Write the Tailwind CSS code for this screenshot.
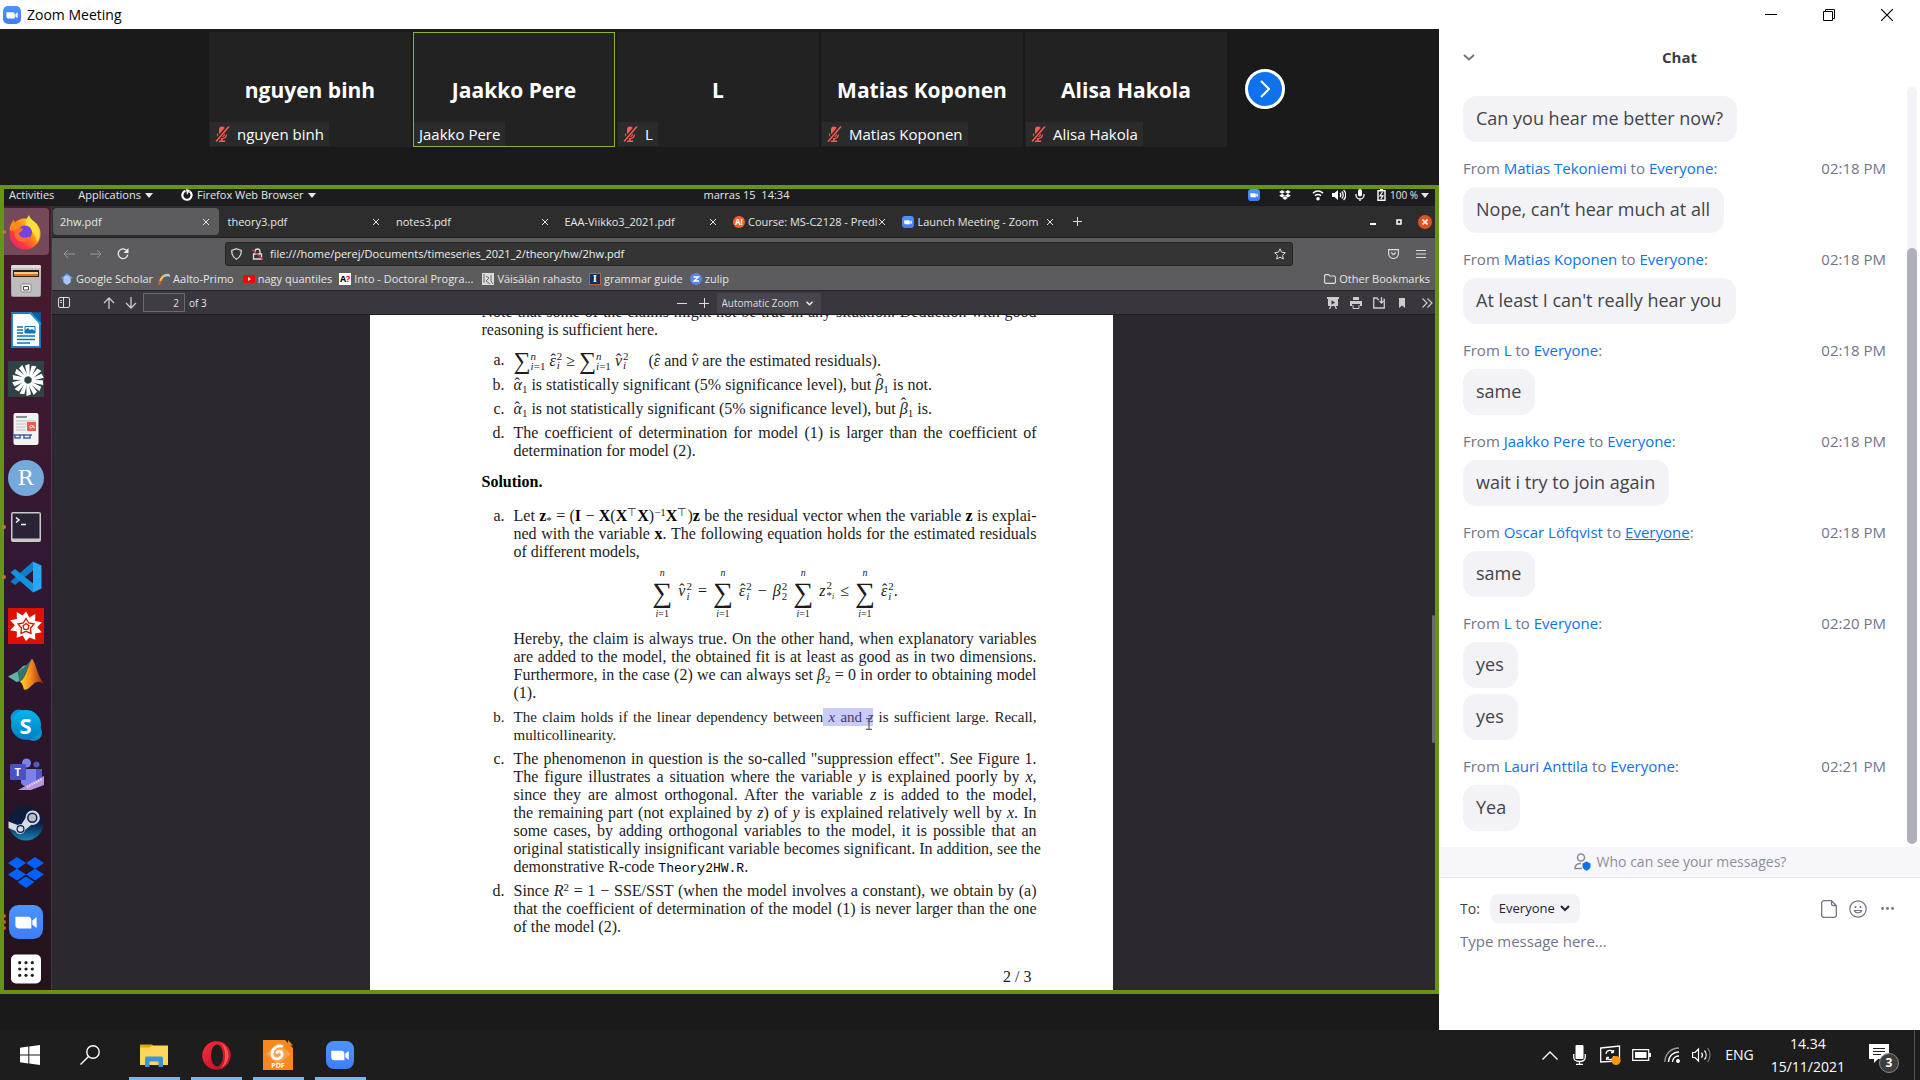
<!DOCTYPE html>
<html lang="en">
<head>
<meta charset="utf-8">
<title>Zoom Meeting</title>
<script src="https://cdn.jsdelivr.net/npm/@tailwindcss/browser@4"></script>
</head>
<body class="flex h-screen min-h-[700px] flex-col overflow-hidden bg-[#1a1a1a] font-['Open_Sans','Noto_Sans',sans-serif]">

<!-- Shared symbols -->
<svg class="absolute size-0" aria-hidden="true">
  <defs>
    <linearGradient id="zg" x1="0" y1="0" x2="0" y2="1"><stop offset="0" stop-color="#4d94ff"/><stop offset="1" stop-color="#3f7df5"/></linearGradient>
    <linearGradient id="ff" x1="1" y1="0" x2="0" y2="1"><stop offset="0" stop-color="#fff44f"/><stop offset=".4" stop-color="#ff980e"/><stop offset=".7" stop-color="#ff3647"/><stop offset="1" stop-color="#e31587"/></linearGradient>
    <linearGradient id="sk" x1="0" y1="0" x2="0" y2="1"><stop offset="0" stop-color="#00b7f0"/><stop offset="1" stop-color="#007cc1"/></linearGradient>
    <linearGradient id="st" x1="0" y1="0" x2="0" y2="1"><stop offset="0" stop-color="#111d2e"/><stop offset=".5" stop-color="#0a1b48"/><stop offset="1" stop-color="#1387b8"/></linearGradient>
    <linearGradient id="ml" x1="0" y1="0" x2="1" y2="0"><stop offset="0" stop-color="#ffd91a"/><stop offset=".45" stop-color="#f58a1f"/><stop offset="1" stop-color="#8f1d08"/></linearGradient>
    <linearGradient id="cab" x1="0" y1="0" x2="0" y2="1"><stop offset="0" stop-color="#c9c9c9"/><stop offset="1" stop-color="#9a9a9a"/></linearGradient>
    <linearGradient id="op" x1="0" y1="0" x2="1" y2="1"><stop offset="0" stop-color="#ff2b3d"/><stop offset="1" stop-color="#b00e1c"/></linearGradient>
  </defs>
  <symbol id="zoom" viewBox="0 0 32 32"><rect width="32" height="32" rx="9" fill="url(#zg)"/><path d="M6 11h11.500a3.500 3.500 0 0 1 3.500 3.500V22H9.500A3.500 3.500 0 0 1 6 18.500z M22 14.500l4-3.200v10.400l-4-3.200z" fill="#fff"/></symbol>
  <symbol id="muted" viewBox="0 0 16 18"><path d="M8 1.500a3 3 0 0 1 3 3V9a3 3 0 0 1-6 0V4.500a3 3 0 0 1 3-3z M7.200 13h1.600v2.500h2.400V17H4.800v-1.500h2.400z" fill="#ff5a5a"/><path d="M3.500 8.500v1A4.500 4.500 0 0 0 8 13.500a4.500 4.500 0 0 0 4.500-4" fill="none" stroke="#ff5a5a" stroke-width="1.200"/><path d="M14.500 1.500L1.500 16.500" stroke="#2b2b2b" stroke-width="4"/><path d="M15 1.500L2 16.500" stroke="#ff5a5a" stroke-width="1.500"/></symbol>
  <symbol id="x" viewBox="0 0 8 8"><path d="M1 1l6 6M7 1L1 7" stroke="currentColor" fill="none"/></symbol>
  <symbol id="dropbox" viewBox="0 0 36 31"><path d="M9 0l9 6-9 6-9-6zM27 0l9 6-9 6-9-6zM0 17.500l9-6 9 6-9 6zM27 11.500l9 6-9 6-9-6zM9.500 25l8.500-5.500 8.500 5.500-8.500 6z" fill="currentColor"/></symbol>
  <symbol id="tri" viewBox="0 0 8 5"><path d="M0 0h8L4 5z" fill="currentColor"/></symbol>
</svg>

<!-- Window title bar -->
<header class="flex h-[29px] shrink-0 items-center bg-white">
  <svg class="ml-[3px] size-[18px]"><use href="#zoom"/></svg>
  <h1 class="ml-[6px] text-[14px] leading-5 text-black">Zoom Meeting</h1>
  <div class="ml-auto flex pr-1 text-black *:flex *:h-[29px] *:w-[58px] *:items-center *:justify-center">
    <button aria-label="Minimize"><svg class="size-3" viewBox="0 0 12 12"><path d="M0 5.500h12" stroke="currentColor"/></svg></button>
    <button aria-label="Restore"><svg class="size-3" viewBox="0 0 12 12" fill="none" stroke="currentColor"><path d="M.5 2.500h9v9h-9zM2.500 2.500v-2h9v9h-2"/></svg></button>
    <button aria-label="Close"><svg class="size-3" viewBox="0 0 12 12"><path d="M0 0l12 12M12 0L0 12" stroke="currentColor" stroke-width="1.200"/></svg></button>
  </div>
</header>

<div class="flex min-h-0 flex-1">
  <!-- Meeting area -->
  <main class="flex min-w-0 flex-1 flex-col">
    <section class="flex h-[156px] shrink-0 justify-center gap-[2px] pl-[55px] pt-[3px] text-white" aria-label="Participants">
      <div class="flex h-[115px] w-[202px] flex-col justify-end bg-[#222]">
        <p class="flex flex-1 items-end justify-center pb-[18px] text-[21px] font-bold leading-7">nguyen binh</p>
        <div class="mb-px ml-px flex h-6 items-center gap-[7px] self-start bg-[#2b2b2b] pl-1 pr-[5px] text-[15px] leading-5"><svg class="h-[18px] w-4"><use href="#muted"/></svg>nguyen binh</div>
      </div>
      <div class="flex h-[115px] w-[202px] flex-col justify-end border border-[#84b92c] bg-[#222]">
        <p class="flex flex-1 items-end justify-center pb-[18px] text-[21px] font-bold leading-7">Jaakko Pere</p>
        <div class="flex h-6 items-center self-start bg-[#2b2b2b] px-[5px] text-[15px] leading-5">Jaakko Pere</div>
      </div>
      <div class="flex h-[115px] w-[202px] flex-col justify-end bg-[#222]">
        <p class="flex flex-1 items-end justify-center pb-[18px] text-[21px] font-bold leading-7">L</p>
        <div class="mb-px ml-px flex h-6 items-center gap-[7px] self-start bg-[#2b2b2b] pl-1 pr-[5px] text-[15px] leading-5"><svg class="h-[18px] w-4"><use href="#muted"/></svg>L</div>
      </div>
      <div class="flex h-[115px] w-[202px] flex-col justify-end bg-[#222]">
        <p class="flex flex-1 items-end justify-center pb-[18px] text-[21px] font-bold leading-7">Matias Koponen</p>
        <div class="mb-px ml-px flex h-6 items-center gap-[7px] self-start bg-[#2b2b2b] pl-1 pr-[5px] text-[15px] leading-5"><svg class="h-[18px] w-4"><use href="#muted"/></svg>Matias Koponen</div>
      </div>
      <div class="flex h-[115px] w-[202px] flex-col justify-end bg-[#222]">
        <p class="flex flex-1 items-end justify-center pb-[18px] text-[21px] font-bold leading-7">Alisa Hakola</p>
        <div class="mb-px ml-px flex h-6 items-center gap-[7px] self-start bg-[#2b2b2b] pl-1 pr-[5px] text-[15px] leading-5"><svg class="h-[18px] w-4"><use href="#muted"/></svg>Alisa Hakola</div>
      </div>
      <button class="ml-4 mt-[37px] flex size-10 shrink-0 items-center justify-center rounded-full border-[3px] border-white bg-[#0e72ed]" aria-label="Next participants"><svg class="h-[18px] w-[10px]" viewBox="0 0 10 18" fill="none" stroke="#fff" stroke-width="2"><path d="M1 1l8 8-8 8"/></svg></button>
    </section>

    <!-- Shared desktop -->
    <section class="mb-9 flex min-h-0 flex-1 flex-col border-4 border-[#679316] text-[11px] leading-4 text-[#e6e6e6]" aria-label="Shared screen">
      <div class="grid h-[17px] shrink-0 grid-cols-[1fr_auto_1fr] items-center bg-[#1c1c1e] pb-[5px] leading-3">
        <div class="flex items-center pl-[5px]">
          <span>Activities</span>
          <span class="ml-6 flex items-center gap-1">Applications <svg class="h-[5px] w-2"><use href="#tri"/></svg></span>
          <span class="ml-7 flex items-center gap-1"><svg class="size-3" viewBox="0 0 12 12"><path d="M4.500 1.800A4.600 4.600 0 1 0 8.500 2.300" fill="none" stroke="#fff" stroke-width="2.200"/><path d="M5 0l4 1-3 5z" fill="#fff"/></svg>Firefox Web Browser <svg class="h-[5px] w-2"><use href="#tri"/></svg></span>
        </div>
        <time class="mr-[-54px]">marras 15&nbsp; 14:34</time>
        <div class="flex items-center justify-end pr-[6px]">
          <svg class="size-3"><use href="#zoom"/></svg>
          <svg class="ml-[19px] h-[10px] w-3 text-white"><use href="#dropbox"/></svg>
          <svg class="ml-[21px] h-3 w-3" viewBox="0 0 12 12" fill="none" stroke="#fff" stroke-width="1.500"><path d="M1 4.200a7 7 0 0 1 10 0M3 6.700a4.200 4.200 0 0 1 6 0"/><circle cx="6" cy="9.700" r="1" fill="#fff"/></svg>
          <svg class="ml-2 h-3 w-[14px]" viewBox="0 0 14 12" fill="#fff"><path d="M0 4h2.500L6 1v10L2.500 8H0z"/><path d="M8 4a3 3 0 0 1 0 4M9.800 2.500a5 5 0 0 1 0 7M11.600 1a7 7 0 0 1 0 10" fill="none" stroke="#fff" stroke-width="1.200"/></svg>
          <svg class="ml-2 h-3 w-3" viewBox="0 0 12 12" fill="#fff"><rect x="4" y="0" width="4" height="7.500" rx="2"/><path d="M2 5v1a4 4 0 0 0 8 0V5M6 10v2" fill="none" stroke="#fff" stroke-width="1.300"/></svg>
          <svg class="ml-[11px] h-3 w-[9px]" viewBox="0 0 9 12" fill="none" stroke="#fff" stroke-width="1.400"><path d="M1 1.800h7v9.400H1zM3 .7h3"/><path d="M5.500 3L3 6.800h3L3.800 10" stroke-width="1.200"/></svg>
          <span class="ml-1 text-[10px]">100 %</span>
          <svg class="ml-[3px] h-[5px] w-2"><use href="#tri"/></svg>
        </div>
      </div>

      <div class="flex min-h-0 flex-1">
        <!-- Dock -->
        <nav class="flex w-[48px] shrink-0 flex-col justify-between border-r border-[#3f3a45] bg-linear-to-b from-[#4a1a2c] via-[#301733] via-50% to-[#24121c] pt-[2px] *:flex *:h-[47px] *:shrink-0 *:items-center *:justify-center *:pr-1" aria-label="Dock">
          <a href="#" aria-label="Firefox" class="relative mr-[2px] rounded-r-sm bg-[#74495a]"><span class="absolute -left-[2px] size-1 rounded-full bg-[#c07a1c]"></span>
            <svg class="size-9" viewBox="0 0 36 36"><circle cx="18" cy="20" r="15.500" fill="url(#ff)"/><path d="M22 1c1 4 4 5 7 9 5 7 4 14 1 18-2-9-5-11-11-14-1-5 0-9 3-13z" fill="#ffde3a"/><path d="M2.500 16C3 11 5 8 7 5.500 7 8 8 9 9 9.500c2-.5 4-.5 6 .5-3 2-3 4-5 8z" fill="#ff8a1c"/><circle cx="18" cy="18.500" r="7" fill="#7542e5"/><path d="M8 16c2-3 5-2 8-1-1 3-4 3-4 5 1 4 6 5 11 2-2 5-7 7-11 5-4-2-5-6-4-11z" fill="#ff6f2c"/></svg></a>
          <a href="#" aria-label="Files"><svg class="size-9" viewBox="0 0 36 36"><rect x="3" y="2" width="30" height="32" rx="2.500" fill="url(#cab)"/><rect x="3" y="2" width="30" height="3" rx="1.500" fill="#dcdcdc"/><rect x="5" y="7" width="26" height="8" fill="#2c2018"/><path d="M6 9h24v2H6z" fill="#f6c58a"/><path d="M6 11h24v2H6z" fill="#d8722a"/><path d="M4 14h28v19H4z" fill="#bdbdbd"/><rect x="13" y="21" width="10" height="8" rx="1" fill="#efefef" stroke="#8a8a8a"/><path d="M15.500 23.500h5v3.500h-5z" fill="#fff" stroke="#444"/></svg></a>
          <a href="#" aria-label="LibreOffice Writer"><svg class="size-9" viewBox="0 0 36 36"><path d="M4 1h19l9 9v25H4z" fill="#fff" stroke="#1b7fc0" stroke-width="1.800"/><path d="M23 .3h9.800V12z" fill="#0f5f9c"/><path d="M22 .3l10.800 12" stroke="#1b9adc" stroke-width="2"/><path d="M9 15h6M9 18h6M9 21h6M9 24h18M9 27.500h18M9 31h13" stroke="#1173b4" stroke-width="1.500"/><path d="M17 14.500h10v6.500H17z" fill="#fff" stroke="#1173b4"/><path d="M17 21v-3l3-2 2 2 2-1 3 2v2z" fill="#1173b4"/></svg></a>
          <a href="#" aria-label="Turbine"><svg class="size-9" viewBox="0 0 36 36"><rect width="36" height="36" fill="#2f4344"/><g fill="#fff"><path id="bl" d="M19.300 15.500L17 4.500l4.500-1.500.2 12z"/><use href="#bl" transform="rotate(26 20 19)"/><use href="#bl" transform="rotate(51 20 19)"/><use href="#bl" transform="rotate(77 20 19)"/><use href="#bl" transform="rotate(103 20 19)"/><use href="#bl" transform="rotate(129 20 19)"/><use href="#bl" transform="rotate(154 20 19)"/><use href="#bl" transform="rotate(180 20 19)"/><use href="#bl" transform="rotate(206 20 19)"/><use href="#bl" transform="rotate(231 20 19)"/><use href="#bl" transform="rotate(257 20 19)"/><use href="#bl" transform="rotate(283 20 19)"/><use href="#bl" transform="rotate(309 20 19)"/><use href="#bl" transform="rotate(334 20 19)"/></g></svg></a>
          <a href="#" aria-label="Document Viewer"><svg class="size-9" viewBox="0 0 36 36"><rect x="5.500" y="2" width="25" height="32" rx="2" fill="#f5f3f2"/><path d="M8 6h11" stroke="#555" stroke-width="1.300"/><path d="M8 10h20M8 13h10M8 16h10M8 19h10" stroke="#cfcfcf" stroke-width="1.600"/><rect x="19" y="11" width="9" height="9" fill="#ee5a4c"/><path d="M25 15.500c-1-2-4-1-3 1 1 1 3 0 3-2 0 2 0 3 2 2" fill="none" stroke="#fff" stroke-width=".9"/><path d="M5 24h19M7 24v3h5v-3M16 24v3h6v-3" fill="none" stroke="#3b62a8" stroke-width="1.500"/></svg></a>
          <a href="#" aria-label="RStudio"><span class="flex size-9 shrink-0 items-center justify-center rounded-full bg-[#75a9db] font-['DejaVu_Serif',serif] text-[21px] leading-none text-white">R</span></a>
          <a href="#" aria-label="Terminal" class="relative"><span class="absolute -left-[2px] size-1 rounded-full bg-[#c07a1c]"></span><svg class="size-9" viewBox="0 0 36 36"><rect x="3" y="3" width="30" height="30" rx="2" fill="#c9c9c9"/><rect x="4.500" y="4.500" width="27" height="25" fill="#2a2236"/><path d="M8 8.500l3 2.500-3 2.500M13 15.500h5" fill="none" stroke="#fff" stroke-width="1.500"/></svg></a>
          <a href="#" aria-label="Visual Studio Code" class="relative"><span class="absolute -left-[2px] size-1 rounded-full bg-[#c07a1c]"></span><svg class="size-9" viewBox="0 0 36 36"><path d="M25 2.500v9L7 26l-4.500-3.500z" fill="#0d7fc6"/><path d="M25 33.500v-9L7 10l-4.500 3.500z" fill="#1292dc"/><path d="M25 2.500l8.500 4v23l-8.500 4z" fill="#2aa6f2"/></svg></a>
          <a href="#" aria-label="Mathematica"><svg class="size-9" viewBox="0 0 36 36"><rect width="36" height="36" fill="#dd1100"/><path d="M18 3.500l3.400 5.900 5.900-3.300-.2 6.800 6.700 1.400-4.600 5 4.600 5-6.700 1.300.2 6.200-5.900-2.300L18 33l-3.400-5.500-5.900 2.300.2-6.200-6.700-1.300 4.600-5-4.600-5 6.700-1.400-.2-6.800 5.900 3.300z" fill="#fff"/><path d="M18 10.500l2.700 4.500 5.300 1-3.500 4 .5 5.500-5-2.200-5 2.200.5-5.500-3.500-4 5.300-1z" fill="none" stroke="#dd1100" stroke-width="1.300"/><path d="M18 15.500l3 2.200-1.100 3.600h-3.800L15 17.700z" fill="none" stroke="#dd1100" stroke-width="1.200"/></svg></a>
          <a href="#" aria-label="MATLAB"><svg class="size-9" viewBox="0 0 36 36"><path d="M0 19.500l9.500-5L15 9l4-1-7 16-3.500 1z" fill="#62b3a6"/><path d="M9.500 14.500c5-2 9-6 14.500-13l-8 19-4.500 4z" fill="#35756e"/><path d="M24 1.500c3 4 5 12 7 17 2 4 3 6 5 9-5-4-8-3-11 0-3 2-5 6-9 5-1-3-1-5-4-8 6-3 8-16 12-23z" fill="url(#ml)"/></svg></a>
          <a href="#" aria-label="Skype"><span class="relative flex size-9 shrink-0 items-center justify-center"><svg class="absolute inset-0 size-9" viewBox="0 0 36 36"><circle cx="11" cy="11" r="8.500" fill="#0a93d4"/><circle cx="25.500" cy="25.500" r="8.500" fill="#0a93d4"/><circle cx="18" cy="18" r="15" fill="url(#sk)"/></svg><span class="relative text-[22px] font-bold leading-none text-white">S</span></span></a>
          <a href="#" aria-label="Teams"><span class="relative flex size-9 shrink-0"><svg class="absolute inset-0 size-9" viewBox="0 0 36 36"><circle cx="18.500" cy="7" r="4.500" fill="#7b83eb"/><circle cx="28.500" cy="8.500" r="3" fill="#5059c9"/><path d="M25 13h9v13h-9z" fill="#5059c9"/><path d="M13 13h15v14c0 4-12 6-15 0z" fill="#7b83eb"/><rect x="2" y="8" width="16" height="16" rx="1.500" fill="#4b53bc"/><path d="M36 20v9l-13 5H10z" fill="#b893e0"/><path d="M19 31l15-8" stroke="#e8dcf5" stroke-width="2" stroke-dasharray="1.500 1"/></svg><span class="relative ml-[7px] mt-[10px] text-[11px] font-bold leading-none text-white">T</span></span></a>
          <a href="#" aria-label="Steam"><svg class="size-9" viewBox="0 0 36 36"><circle cx="18" cy="18" r="17.500" fill="url(#st)"/><path d="M24.500 5.500a7.200 7.200 0 1 1-1 14.300L17 25a5 5 0 0 1-9.500 1L.5 23v-6.500l9 3.500c1.500-.8 3-.8 3.800-.6l4.200-6.400a7.200 7.200 0 0 1 7-7.500z" fill="#d9dce2"/><circle cx="24.300" cy="12.700" r="4.500" fill="#b7bcc7" stroke="#0a1b48" stroke-width="1.500"/><circle cx="12.500" cy="24" r="3.400" fill="none" stroke="#0a1b48" stroke-width="1.200"/></svg></a>
          <a href="#" aria-label="Dropbox"><svg class="h-[31px] w-9 text-[#0061fe]"><use href="#dropbox"/></svg></a>
          <a href="#" aria-label="Zoom" class="relative"><span class="absolute -left-[2px] flex flex-col gap-[2px] *:size-1 *:rounded-full *:bg-[#a8701c]"><i></i><i></i><i></i></span><svg class="size-[34px]"><use href="#zoom"/></svg></a>
          <a href="#" aria-label="Show Applications" class="h-[42px]!"><svg class="size-[30px]" viewBox="0 0 30 30"><rect width="30" height="29" y=".5" rx="5" fill="#fff"/><g fill="#222"><circle cx="8.700" cy="8.700" r="1.600"/><circle cx="15" cy="8.700" r="1.600"/><circle cx="21.300" cy="8.700" r="1.600"/><circle cx="8.700" cy="15" r="1.600"/><circle cx="15" cy="15" r="1.600"/><circle cx="21.300" cy="15" r="1.600"/><circle cx="8.700" cy="21.300" r="1.600"/><circle cx="15" cy="21.300" r="1.600"/><circle cx="21.300" cy="21.300" r="1.600"/></g></svg></a>
        </nav>

        <!-- Browser -->
        <div class="flex min-w-0 flex-1 flex-col bg-[#2b292f]">
          <div class="flex h-8 shrink-0 items-center border-b border-[#1e1e1e] bg-[#2d2d2d]">
            <div class="grid w-[1011px] grid-cols-6 *:flex *:h-[27px] *:items-center *:whitespace-nowrap *:pl-[7px] *:pr-[9px] [&_button]:ml-auto [&_svg]:shrink-0" role="tablist">
              <div role="tab" class="mr-[2px] ml-px rounded bg-[#5c5b5e]">2hw.pdf<button aria-label="Close tab"><svg class="size-2"><use href="#x"/></svg></button></div>
              <div role="tab">theory3.pdf<button aria-label="Close tab"><svg class="size-2"><use href="#x"/></svg></button></div>
              <div role="tab">notes3.pdf<button aria-label="Close tab"><svg class="size-2"><use href="#x"/></svg></button></div>
              <div role="tab">EAA-Viikko3_2021.pdf<button aria-label="Close tab"><svg class="size-2"><use href="#x"/></svg></button></div>
              <div role="tab"><span class="mr-[3px] flex size-3 shrink-0 items-center justify-center rounded-full bg-[#f0622c] text-[8px] font-bold text-white">A!</span>Course: MS-C2128 - Predi<button aria-label="Close tab"><svg class="size-2"><use href="#x"/></svg></button></div>
              <div role="tab"><svg class="mr-1 size-3"><use href="#zoom"/></svg>Launch Meeting - Zoom<button aria-label="Close tab"><svg class="size-2"><use href="#x"/></svg></button></div>
            </div>
            <button class="ml-[10px]" aria-label="New tab"><svg class="size-[9px]" viewBox="0 0 9 9" stroke="#ddd"><path d="M4.500 0v9M0 4.500h9"/></svg></button>
            <div class="ml-auto flex items-center pr-[3px]">
              <button aria-label="Minimize browser"><svg class="h-3 w-[6px]" viewBox="0 0 6 12"><path d="M0 8h6" stroke="#fff" stroke-width="2"/></svg></button>
              <button class="ml-5" aria-label="Restore browser"><svg class="size-[6px]" viewBox="0 0 6 6"><path d="M1 1h4v4H1z" fill="none" stroke="#fff" stroke-width="1.500"/></svg></button>
              <button class="ml-4 flex size-[14px] items-center justify-center rounded-full bg-[#e2501f] text-white" aria-label="Close browser"><svg class="size-[6px]" viewBox="0 0 6 6"><path d="M.5.5l5 5M5.500.5l-5 5" stroke="#fff" stroke-width="1.600"/></svg></button>
            </div>
          </div>

          <div class="flex h-[31px] shrink-0 items-center bg-[#5c5b5e]">
            <button class="ml-[11px]" aria-label="Back"><svg class="h-[10px] w-3" viewBox="0 0 12 10" fill="none" stroke="#939295"><path d="M12 5H1M5 1L1 5l4 4"/></svg></button>
            <button class="ml-[15px]" aria-label="Forward"><svg class="h-[10px] w-3" viewBox="0 0 12 10" fill="none" stroke="#939295"><path d="M0 5h11M7 1l4 4-4 4"/></svg></button>
            <button class="ml-[15px]" aria-label="Reload"><svg class="size-3" viewBox="0 0 12 12"><path d="M10 3A4.800 4.800 0 1 0 10.800 6.500" fill="none" stroke="#eee" stroke-width="1.300"/><path d="M11.500 0v5h-5z" fill="#eee"/></svg></button>
            <div class="ml-24 mr-[95px] flex h-6 flex-1 items-center rounded-[3px] border border-[#242424] bg-[#343434] pl-[5px] pr-[6px]">
              <svg class="h-3 w-[11px]" viewBox="0 0 11 12"><path d="M5.500.7l4.800 1.700c0 4-1 7-4.800 8.900C1.700 9.400.7 6.400.7 2.400z" fill="none" stroke="#ddd" stroke-width="1.200"/></svg>
              <svg class="ml-[10px] h-3 w-[11px]" viewBox="0 0 11 12" fill="none" stroke="#ddd" stroke-width="1.300"><path d="M1.500 6h8v5h-8zM3 6V3.500a2.500 2.500 0 0 1 5 0V6"/><path d="M0 1.500l11 10" stroke="#d0304a"/></svg>
              <input class="ml-[7px] min-w-0 flex-1 bg-transparent text-[11px] text-[#f0f0f0] outline-none" aria-label="Address" value="file:///home/perej/Documents/timeseries_2021_2/theory/hw/2hw.pdf">
              <svg class="size-3" viewBox="0 0 12 12"><path d="M6 .8l1.600 3.400 3.700.5-2.700 2.600.7 3.700L6 9.200 2.700 11l.7-3.700L.7 4.700l3.700-.5z" fill="none" stroke="#ddd"/></svg>
            </div>
            <button class="mr-[17px]" aria-label="Pocket"><svg class="h-[10px] w-[11px]" viewBox="0 0 11 10" fill="none" stroke="#ddd" stroke-width="1.100"><path d="M.6.6h9.800v4a4.900 4.900 0 0 1-9.800 0z"/><path d="M3.200 3.500l2.300 2.200 2.300-2.200"/></svg></button>
            <button class="mr-[9px]" aria-label="Menu"><svg class="size-[10px]" viewBox="0 0 10 10" stroke="#ddd"><path d="M0 1.500h10M0 5h10M0 8.500h10"/></svg></button>
          </div>

          <div class="flex h-[22px] shrink-0 items-center border-b border-[#252427] bg-[#5c5b5e] pb-px *:flex *:shrink-0 *:items-center *:whitespace-nowrap">
            <a href="#" class="ml-[9px] gap-[3px]"><svg class="size-3" viewBox="0 0 12 12"><path d="M6 0l6 5-2 1.500a4 4 0 1 1-8 0L0 5z" fill="#5b8fea"/><path d="M2.500 6a3.500 3.500 0 0 1 7 0v3.500L6 12 2.500 9.500z" fill="#a9c7f8"/></svg>Google Scholar</a>
            <a href="#" class="ml-[5px] gap-[3px]"><svg class="size-3" viewBox="0 0 12 12" fill="none" stroke-width="2.200"><path d="M1.500 12C1.500 5 5 1.500 11 2" stroke="#e8543f"/><path d="M2.500 8C4 3 7 1.500 11 2" stroke="#f4c04a"/><path d="M6 3c2-1 4-1 6 0" stroke="#8fd3ec"/></svg>Aalto-Primo</a>
            <a href="#" class="ml-[9px] gap-[3px]"><svg class="h-2 w-3" viewBox="0 0 12 8"><rect width="12" height="8" rx="2" fill="red"/><path d="M5 2l3 2-3 2z" fill="#fff"/></svg>nagy quantiles</a>
            <a href="#" class="ml-[7px] gap-[3px]"><span class="flex size-3 items-center justify-center bg-white text-[9px] font-bold leading-3 text-black">A<span class="text-red-600">?</span></span>Into - Doctoral Progra...</a>
            <a href="#" class="ml-[9px] gap-[3px]"><svg class="size-3" viewBox="0 0 12 12"><rect width="12" height="12" fill="#ddd"/><path d="M2 1v9M4 3l3 2-3 3 4 3M9 2v6l2 3" fill="none" stroke="#666"/></svg>Väisälän rahasto</a>
            <a href="#" class="ml-[7px] gap-[3px]"><span class="flex size-3 items-center justify-center border border-[#b5673a] bg-[#0c2f5e] font-['DejaVu_Serif',serif] text-[9px] font-bold leading-none text-white">I</span>grammar guide</a>
            <a href="#" class="ml-[7px] gap-[3px]"><svg class="size-3" viewBox="0 0 12 12"><circle cx="6" cy="6" r="6" fill="#5b84ee"/><path d="M3.500 4h5L4 8h5" fill="none" stroke="#fff" stroke-width="1.300"/></svg>zulip</a>
            <a href="#" class="ml-auto mr-[5px] gap-[3px]"><svg class="h-[10px] w-3" viewBox="0 0 12 10"><path d="M.6 8.500v-7l.9-.9h3L6 2h4.500l.9.900v5.600l-.9.900h-9z" fill="none" stroke="#ddd" stroke-width="1.100"/></svg>Other Bookmarks</a>
          </div>

          <!-- PDF toolbar -->
          <div class="grid h-6 shrink-0 grid-cols-[1fr_auto_1fr] items-center border-b border-[#1d1c20] bg-[#39373d]">
            <div class="flex items-center">
              <button class="ml-[6px]" aria-label="Toggle sidebar"><svg class="h-[11px] w-3" viewBox="0 0 12 11" fill="none" stroke="#ddd"><rect x=".5" y=".5" width="11" height="10" rx="1.500"/><path d="M5.500.5v10M2 3.500h2M2 5.500h2"/></svg></button>
              <button class="ml-[33px]" aria-label="Previous page"><svg class="size-3" viewBox="0 0 12 12" fill="none" stroke="#ccc" stroke-width="1.300"><path d="M6 12V1M1 6l5-5 5 5"/></svg></button>
              <button class="ml-[10px]" aria-label="Next page"><svg class="size-3" viewBox="0 0 12 12" fill="none" stroke="#ccc" stroke-width="1.300"><path d="M6 0v11M1 6l5 5 5-5"/></svg></button>
              <input aria-label="Page" value="2" class="ml-[6px] h-[19px] w-[42px] border border-[#6b6a6e] bg-[#3f3d43] pr-[5px] text-right text-[10px] text-[#ddd] outline-none">
              <span class="ml-1 text-[10px]">of 3</span>
            </div>
            <div class="flex items-center pl-[10px]">
              <button aria-label="Zoom out"><svg class="size-[10px]" viewBox="0 0 10 10"><path d="M0 5.500h10" stroke="#ddd"/></svg></button>
              <button class="ml-3" aria-label="Zoom in"><svg class="size-[10px]" viewBox="0 0 10 10"><path d="M0 5.500h10M5.500 0v10" stroke="#ddd"/></svg></button>
              <div class="relative ml-2">
                <select aria-label="Zoom level" class="h-5 w-[104px] appearance-none bg-[#48464c] pl-[5px] text-[10px] text-[#ddd]"><option>Automatic Zoom</option></select>
                <svg class="pointer-events-none absolute right-2 top-2 h-[5px] w-[7px]" viewBox="0 0 7 5" fill="none" stroke="#eee" stroke-width="1.500"><path d="M.5.7l3 3 3-3"/></svg>
              </div>
            </div>
            <div class="flex items-center justify-end pr-[2px]">
              <button aria-label="Presentation mode"><svg class="size-3" viewBox="0 0 12 12"><path d="M0 0h12v2H0zM1 2h10v7H1z" fill="#ccc"/><path d="M4 9L2.500 12M8 9l1.500 3" stroke="#ccc" stroke-width="1.300"/><path d="M4.500 3.200L8 5.500 4.500 7.800z" fill="#39373d"/></svg></button>
              <button class="ml-[11px]" aria-label="Print"><svg class="size-3" viewBox="0 0 12 12"><path d="M3 0h6v3H3zM0 4h12v5h-2V7H2v2H0z" fill="#ccc"/><path d="M3 8v3.500h6V8" fill="none" stroke="#ccc"/></svg></button>
              <button class="ml-[11px]" aria-label="Download"><svg class="size-3" viewBox="0 0 12 12" fill="none" stroke="#ccc" stroke-width="1.300"><path d="M6 2.500H5l-1-1.500H.7v10h10.600V2.500H10.500M8.500 0v6M6.500 4l2 2 2-2"/></svg></button>
              <button class="ml-[11px]" aria-label="Bookmark"><svg class="size-3" viewBox="0 0 12 12"><path d="M3 1h6v10L6 8.500 3 11z" fill="#ccc"/></svg></button>
              <button class="ml-[13px]" aria-label="More tools"><svg class="size-3" viewBox="0 0 12 12" fill="none" stroke="#ccc" stroke-width="1.200"><path d="M1.500 1.500L6 6l-4.500 4.500M6.500 1.500L11 6l-4.500 4.500"/></svg></button>
            </div>
          </div>

          <!-- PDF page -->
          <div class="relative flex min-h-0 flex-1 justify-center overflow-hidden">
            <article class="-mt-[12px] mr-[5px] h-[687px] w-[743px] shrink-0 overflow-hidden bg-white pl-28 pr-[76px] font-['Liberation_Serif',serif] text-[16px] leading-[18px] text-[#1c1c1c] [&_.h]:relative [&_.h]:before:absolute [&_.h]:before:left-[1px] [&_.h]:before:-top-px [&_.h]:before:not-italic [&_.h]:before:content-['ˆ'] [&_b]:text-black [&_p>span]:block [&_p>span]:whitespace-nowrap [&_p>span]:[text-align-last:justify] [&_p>span.e]:[text-align-last:left] [&_sub]:text-[11px] [&_sup]:text-[11px]">
              <p><span>Note that some of the claims might not be true in any situation. Deduction with good</span><span class="e">reasoning is sufficient here.</span></p>
              <ol class="mt-3 flex flex-col gap-[6px] *:flex *:gap-[9px] [&>li>i]:w-[23px] [&>li>i]:shrink-0 [&>li>i]:text-right [&>li>i]:not-italic [&>li>p]:min-w-0 [&>li>p]:flex-1">
                <li><i>a.</i><p class="h-[19px]"><span class="e flex! items-center"><span class="text-[24px]">∑</span><span class="flex flex-col text-[11px] leading-[10px]"><em>n</em><span><em>i</em>=1</span></span>&nbsp;<em class="h">ε</em><span class="ml-px flex flex-col text-[11px] leading-[9px]"><span>2</span><em>i</em></span>&nbsp;≥&nbsp;<span class="text-[24px]">∑</span><span class="flex flex-col text-[11px] leading-[10px]"><em>n</em><span><em>i</em>=1</span></span>&nbsp;<em class="h">ν</em><span class="ml-px flex flex-col text-[11px] leading-[9px]"><span>2</span><em>i</em></span><span class="ml-5">(<em class="h">ε</em> and <em class="h">ν</em> are the estimated residuals).</span></span></p></li>
                <li><i>b.</i><p><span class="e"><em class="h">α</em><sub>1</sub> is statistically significant (5% significance level), but <em class="h before:-top-[5px]!">β</em><sub>1</sub> is not.</span></p></li>
                <li><i>c.</i><p><span class="e"><em class="h">α</em><sub>1</sub> is not statistically significant (5% significance level), but <em class="h before:-top-[5px]!">β</em><sub>1</sub> is.</span></p></li>
                <li><i>d.</i><p><span>The coefficient of determination for model (1) is larger than the coefficient of</span><span class="e">determination for model (2).</span></p></li>
              </ol>
              <h2 class="mt-[13px] font-bold text-black">Solution.</h2>
              <ol class="mt-4 flex flex-col gap-[6px] *:flex *:gap-[9px] [&>li>i]:w-[23px] [&>li>i]:shrink-0 [&>li>i]:text-right [&>li>i]:not-italic [&>li>div]:min-w-0 [&>li>div]:flex-1 [&>li>p]:min-w-0 [&>li>p]:flex-1">
                <li><i>a.</i><div>
                  <p><span>Let <b>z</b><sub>*</sub> = (<b>I</b> − <b>X</b>(<b>X</b><sup>⊤</sup><b>X</b>)<sup>−1</sup><b>X</b><sup>⊤</sup>)<b>z</b> be the residual vector when the variable <b>z</b> is explai-</span><span>ned with the variable <b>x</b>. The following equation holds for the estimated residuals</span><span class="e">of different models,</span></p>
                  <div class="mb-[9px] flex h-[60px] items-center justify-center gap-[6px] [&_.l]:ml-px [&_.l]:flex [&_.l]:flex-col [&_.l]:text-[11px] [&_.l]:leading-[10px] [&_.s]:flex [&_.s]:flex-col [&_.s]:items-center [&_.s]:pt-1 [&_.s]:text-[10px] [&_.s]:leading-[11px] [&_.s>strong]:text-[28px] [&_.s>strong]:font-normal [&_.s>strong]:leading-[30px]">
                    <span class="s"><em>n</em><strong>∑</strong><span><em>i</em>=1</span></span><span class="flex items-center"><em class="h">ν</em><span class="l"><span>2</span><em>i</em></span></span>=
                    <span class="s"><em>n</em><strong>∑</strong><span><em>i</em>=1</span></span><span class="flex items-center"><em class="h">ε</em><span class="l"><span>2</span><em>i</em></span></span>−
                    <span class="flex items-center"><em>β</em><span class="l"><span>2</span><span>2</span></span></span><span class="s"><em>n</em><strong>∑</strong><span><em>i</em>=1</span></span><span class="flex items-center"><em>z</em><span class="l"><span>2</span><span>*<em class="text-[8px]">i</em></span></span></span>≤
                    <span class="s"><em>n</em><strong>∑</strong><span><em>i</em>=1</span></span><span class="flex items-center"><em class="h">ε</em><span class="l"><span>2</span><em>i</em></span>.</span>
                  </div>
                  <p><span>Hereby, the claim is always true. On the other hand, when explanatory variables</span><span>are added to the model, the obtained fit is at least as good as in two dimensions.</span><span>Furthermore, in the case (2) we can always set <em>β</em><sub>2</sub> = 0 in order to obtaining model</span><span class="e">(1).</span></p>
                </div></li>
                <li class="text-[15px]"><i>b.</i><p><span>The claim holds if the linear dependency between<mark class="relative bg-[#ccccfb] py-px text-[#3c3c6c]"> <em>x</em> and <em>z</em><svg class="absolute -bottom-1 right-[1px] h-3 w-[6px]" viewBox="0 0 6 12"><path d="M0 .7h6M0 11.300h6M3 1v10" stroke="#666" stroke-width="1.300"/></svg></mark> is sufficient large. Recall,</span><span class="e">multicollinearity.</span></p></li>
                <li><i>c.</i><p><span>The phenomenon in question is the so-called "suppression effect". See Figure 1.</span><span>The figure illustrates a situation where the variable <em>y</em> is explained poorly by <em>x</em>,</span><span>since they are almost orthogonal. After the variable <em>z</em> is added to the model,</span><span>the remaining part (not explained by <em>z</em>) of <em>y</em> is explained relatively well by <em>x</em>. In</span><span>some cases, by adding orthogonal variables to the model, it is possible that an</span><span>original statistically insignificant variable becomes significant. In addition, see the</span><span class="e">demonstrative R-code <code class="font-['Liberation_Mono',monospace] text-[13px] leading-none text-black">Theory2HW.R</code>.</span></p></li>
                <li><i>d.</i><p><span>Since <em>R</em><sup>2</sup> = 1 − SSE/SST (when the model involves a constant), we obtain by (a)</span><span>that the coefficient of determination of the model (1) is never larger than the one</span><span class="e">of the model (2).</span></p></li>
              </ol>
              <p class="mr-[5px] mt-8 text-right">2 / 3</p>
            </article>
            <div class="absolute right-0 top-[300px] h-[128px] w-[3px] rounded bg-[#6b6a6e]"></div>
          </div>
        </div>
      </div>
    </section>
  </main>

  <!-- Chat -->
  <aside class="flex w-[481px] shrink-0 flex-col bg-white">
    <div class="relative flex h-[58px] shrink-0 items-center justify-center pb-[2px]">
      <button class="absolute left-6" aria-label="Collapse chat"><svg class="h-[7px] w-3" viewBox="0 0 12 7" fill="none" stroke="#6e7687" stroke-width="2"><path d="M1 1l5 4.500L11 1"/></svg></button>
      <h2 class="text-[15px] font-bold leading-5 text-[#3c3c43]">Chat</h2>
    </div>
    <div class="relative min-h-0 flex-1 overflow-hidden pl-6 pr-[34px] pt-[9px] text-[18px] text-[#444449] [&_a]:text-[#0e72ed] [&_header]:flex [&_header]:justify-between [&_header]:pb-2 [&_header]:pt-4 [&_header]:text-[15px] [&_header]:leading-[21px] [&_header]:text-[#747487] [&_p]:w-fit [&_p]:rounded-[14px] [&_p]:bg-[#f2f2f7] [&_p]:pl-[13px] [&_p]:pr-[14px] [&_p]:pb-[11px] [&_p]:pt-[9px] [&_p]:leading-[26px]">
      <p>Can you hear me better now?</p>
      <header><span>From <a href="#">Matias Tekoniemi</a> to <a href="#">Everyone</a>:</span><time>02:18 PM</time></header>
      <p>Nope, can’t hear much at all</p>
      <header><span>From <a href="#">Matias Koponen</a> to <a href="#">Everyone</a>:</span><time>02:18 PM</time></header>
      <p>At least I can't really hear you</p>
      <header><span>From <a href="#">L</a> to <a href="#">Everyone</a>:</span><time>02:18 PM</time></header>
      <p>same</p>
      <header><span>From <a href="#">Jaakko Pere</a> to <a href="#">Everyone</a>:</span><time>02:18 PM</time></header>
      <p>wait i try to join again</p>
      <header><span>From <a href="#">Oscar Löfqvist</a> to <a href="#" class="underline">Everyone</a>:</span><time>02:18 PM</time></header>
      <p>same</p>
      <header><span>From <a href="#">L</a> to <a href="#">Everyone</a>:</span><time>02:20 PM</time></header>
      <p>yes</p>
      <p class="mt-[6px]">yes</p>
      <header><span>From <a href="#">Lauri Anttila</a> to <a href="#">Everyone</a>:</span><time>02:21 PM</time></header>
      <p>Yea</p>
      <div class="absolute bottom-[3px] right-[3px] top-0 w-[10px] rounded-full bg-[#f2f2f7]"><div class="absolute inset-x-0 bottom-0 top-[161px] rounded-full bg-[#b0b0ba]"></div></div>
    </div>
    <a href="#" class="ml-px flex h-[31px] shrink-0 items-center justify-center gap-[6px] border-b border-[#e6e6ef] bg-[#f7f7fb] text-[14px] leading-5 text-[#8e8e9c]"><svg class="h-[18px] w-[17px]" viewBox="0 0 17 18" fill="none" stroke="#8a8a99" stroke-width="1.500"><circle cx="7" cy="4.500" r="3.500"/><path d="M8 15.500H1c0-3.500 2-5 6-5"/><path d="M12.500 8.500l4 2v3c0 2-2 3.500-4 4.200-2-.7-4-2.200-4-4.200v-3z" fill="#0e72ed" stroke="none"/></svg>Who can see your messages?</a>
    <div class="flex h-[152px] shrink-0 flex-col pt-4">
      <div class="flex items-center pl-[21px] pr-[26px]">
        <label for="to" class="text-[14px] leading-5 text-[#444449]">To:</label>
        <div class="relative ml-[10px]">
          <select id="to" class="h-[29px] w-[90px] appearance-none rounded-lg bg-[#f2f2f7] pl-[9px] text-[13px] text-[#232333]"><option>Everyone</option></select>
          <svg class="pointer-events-none absolute right-[10px] top-[11px] h-[7px] w-[10px]" viewBox="0 0 10 7" fill="none" stroke="#232333" stroke-width="2"><path d="M1 1l4 4 4-4"/></svg>
        </div>
        <button class="ml-auto" aria-label="Send file"><svg class="h-[18px] w-4" viewBox="0 0 16 18" fill="none" stroke="#747487" stroke-width="1.300"><path d="M3 .7h7.500l4.800 4.800V15a2.300 2.300 0 0 1-2.300 2.300H3A2.300 2.300 0 0 1 .7 15V3A2.300 2.300 0 0 1 3 .7zM10.500.7V4a1.500 1.500 0 0 0 1.500 1.500h3.300"/></svg></button>
        <button class="ml-3" aria-label="Emoji"><svg class="size-[18px]" viewBox="0 0 18 18" fill="none" stroke="#747487" stroke-width="1.200"><circle cx="9" cy="9" r="8.200"/><path d="M5.500 10.500c1 3 6 3 7 0z"/><path d="M6.500 6v2M11.500 6v2" stroke-width="1.600"/></svg></button>
        <button class="ml-[14px]" aria-label="More"><svg class="h-[3px] w-[13px]" viewBox="0 0 13 3" fill="#747487"><circle cx="1.500" cy="1.500" r="1.400"/><circle cx="6.500" cy="1.500" r="1.400"/><circle cx="11.500" cy="1.500" r="1.400"/></svg></button>
      </div>
      <textarea class="mt-[7px] min-h-0 flex-1 resize-none px-[21px] text-[15px] leading-[22px] outline-none placeholder:text-[#747487]" placeholder="Type message here..." aria-label="Message"></textarea>
    </div>
  </aside>
</div>

<!-- Taskbar -->
<footer class="flex h-[50px] shrink-0 bg-[#1d1d1d] text-white">
  <button class="flex w-[60px] items-center justify-center" aria-label="Start"><svg class="size-5" viewBox="0 0 20 20" fill="#fff"><path d="M0 2.800L8.300 1.600V9.500H0zM9.300 1.500L20 0v9.500H9.300zM0 10.500h8.300v7.900L0 17.200zM9.300 10.500H20V20L9.300 18.500z"/></svg></button>
  <button class="mr-[3px] flex w-[60px] items-center justify-center" aria-label="Search"><svg class="size-5" viewBox="0 0 20 20" fill="none" stroke="#fff" stroke-width="1.400"><circle cx="13" cy="7" r="6.200"/><path d="M8.500 11.500L.5 19.500"/></svg></button>
  <div class="flex *:relative *:flex *:w-[62px] *:items-center *:justify-center [&_span]:absolute [&_span]:bottom-0 [&_span]:h-[3px] [&_span]:w-[51px] [&_span]:bg-[#76b9ed]">
    <button aria-label="File Explorer"><svg class="h-6 w-7" viewBox="0 0 28 24"><path d="M0 1.500h12l1.500 1.500v3H0z" fill="#e2a512"/><path d="M0 4.500h9l4-2h15V22H0z" fill="#ffd65c"/><path d="M5 24V15.500a2 2 0 0 1 2-2h14a2 2 0 0 1 2 2V24h-4.500v-5.500h-9V24z" fill="#3c92d6"/></svg><span></span></button>
    <button aria-label="Opera"><svg class="size-[29px]" viewBox="0 0 29 29"><circle cx="14.500" cy="14.500" r="14.300" fill="url(#op)"/><path d="M17 1a14.300 14.300 0 0 1 0 27c4-2 6-7 6-13.500S21 3 17 1z" fill="#ff5252"/><ellipse cx="15" cy="14.500" rx="6" ry="11" fill="#1d1d1d"/></svg><span></span></button>
    <button aria-label="Foxit PDF"><svg class="size-[30px]" viewBox="0 0 30 30"><path d="M0 0h22l8 8v22H0z" fill="#f7881f"/><path d="M25 0v5.500h5z" fill="#f7881f"/><path d="M15 3L28 14 15 25 3 14z" fill="#f9a04a"/><path d="M20 6.500c-5-2-11 2-11 7.500 0 5 6 6.500 9 3 1.500-1.500 1.500-4 0-5.500-2-1-4 0-4.500 2" fill="none" stroke="#fff" stroke-width="2.800"/></svg><b class="absolute bottom-[11px] text-[7px] leading-none">PDF</b><span></span></button>
    <button aria-label="Zoom"><svg class="size-7"><use href="#zoom"/></svg><span></span></button>
  </div>
  <div class="ml-auto flex items-center">
    <button aria-label="Show hidden icons"><svg class="h-[9px] w-4" viewBox="0 0 16 9" fill="none" stroke="#fff" stroke-width="1.400"><path d="M.5 8.500L8 1l7.500 7.500"/></svg></button>
    <svg class="ml-[15px] h-5 w-[13px]" viewBox="0 0 13 20"><rect x="2.500" width="8" height="14" rx="1" fill="#fff"/><path d="M.7 9v3c0 3 2 4.500 5.800 4.500s5.800-1.500 5.800-4.500V9M6.500 16.500v3M3 19.300h7" fill="none" stroke="#fff" stroke-width="1.300"/></svg>
    <svg class="ml-[14px] h-5 w-[21px]" viewBox="0 0 21 20"><path d="M.7 3L19.500 1v15L.7 17z" fill="none" stroke="#fff" stroke-width="1.300"/><path d="M6 9a4 4 0 0 1 7.500-1.500V5M13.500 7.500H11M14 11a4 4 0 0 1-7.500 1.500V15M6.500 12.500H9" fill="none" stroke="#fff" stroke-width="1.300"/><circle cx="16" cy="15.500" r="4.500" fill="#ff9500"/></svg>
    <svg class="ml-[11px] h-3 w-[19px]" viewBox="0 0 19 12"><path d="M.7.700h16v10.600H.7z" fill="none" stroke="#fff" stroke-width="1.200"/><path d="M3 3h11.500v6H3zM17 4h2v4h-2z" fill="#fff"/></svg>
    <svg class="ml-[13px] size-4" viewBox="0 0 16 16" fill="none" stroke="#fff" stroke-width="1.300"><path d="M8.500 15A6 6 0 0 1 15 9M4.500 15A10 10 0 0 1 15 5" /><path d="M.8 15C1 7 7 1 15 1" stroke="#999"/><circle cx="14" cy="14" r="1.300" fill="#fff"/></svg>
    <svg class="ml-3 h-4 w-5" viewBox="0 0 20 16" fill="none" stroke="#fff" stroke-width="1.200"><path d="M.6 5.500h2.500L6.500 2v12L3 10.500H.6zM9.500 5.500a4 4 0 0 1 0 5M12.500 3.500a7 7 0 0 1 0 9"/><path d="M15.500 1a11 11 0 0 1 0 14" stroke="#777"/></svg>
    <span class="ml-[13px] text-[14px] leading-5">ENG</span>
    <time class="ml-[17px] text-center text-[14px] leading-[23px]">14.34<br>15/11/2021</time>
    <button class="relative ml-6 mr-[15px] size-[30px]" aria-label="Notifications, 3 new"><svg class="absolute left-0 top-1 h-[19px] w-5" viewBox="0 0 20 19"><path d="M0 0h20v15H9l-4 4v-4H0z" fill="#fff"/><path d="M4 4.500h12M4 7.500h12M4 10.500h8" stroke="#1d1d1d"/></svg><span class="absolute left-[10px] top-[13px] flex size-5 items-center justify-center rounded-full border border-[#8a8a8a] bg-[#3d3d3d] text-[12px] font-bold leading-none">3</span></button>
    <div class="mr-[5px] h-[50px] w-px bg-[#555]"></div>
  </div>
</footer>
</body>
</html>
